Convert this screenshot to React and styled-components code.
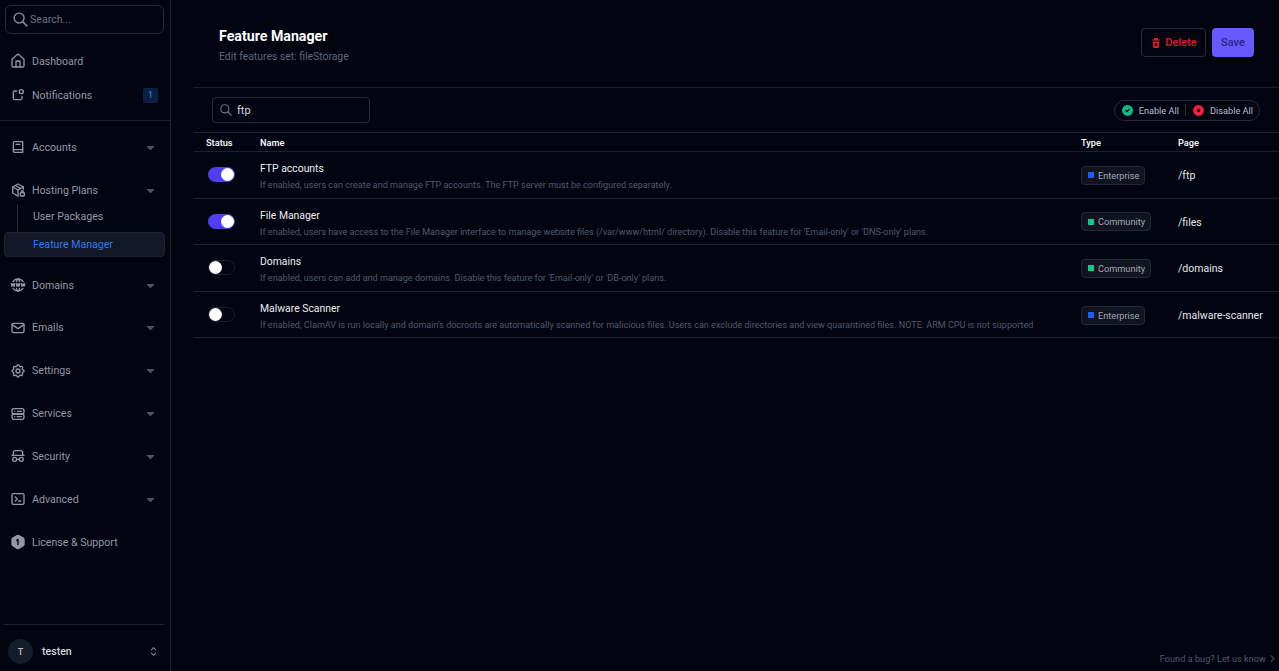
import React from 'react';
import styled, { createGlobalStyle } from 'styled-components';
import { LuHouse } from 'react-icons/lu';
import {
  TbSearch, TbNotification, TbBook2, TbWorldWww, TbMail,
  TbSettings, TbServer2, TbSpy, TbTerminal2, TbHexagonNumber1Filled, TbCaretDownFilled,
  TbSelector, TbCircleCheckFilled, TbCircleXFilled, TbChevronRight,
} from 'react-icons/tb';

const GlobalStyle = createGlobalStyle`
  html, body { margin: 0; padding: 0; height: 100%; background: #02040f; }
  body { font-family: Roboto, Inter, sans-serif; color: #fff; overflow: hidden; }
`;

const Page = styled.div`
  display: flex;
  width: 1279px;
  height: 671px;
  background: #02040f;
  overflow: hidden;
`;

const Sidebar = styled.aside`
  width: 170px;
  flex: none;
  border-right: 1px solid #1c2230;
  display: flex;
  flex-direction: column;
  padding-top: 5px;
`;

const SearchBox = styled.div`
  margin: 0 6px 0 5px;
  height: 29px;
  box-sizing: border-box;
  border: 1px solid #272c39;
  border-radius: 6px;
  display: flex;
  align-items: center;
  gap: 1px;
  padding-left: 6px;
  color: #6b7280;
  font-size: 10.6px;
  svg { color: #858b98; }
`;

const Nav = styled.nav`
  display: flex;
  flex-direction: column;
  flex: 1;
  padding-top: 10px;
`;

const NavRow = styled.div`
  height: ${(p) => p.$h || 42.85}px;
  flex: none;
  display: flex;
  align-items: center;
  padding: 0 12px 0 10px;
  color: #9298a4;
  font-size: 10.6px;
  gap: 6px;
  svg { flex: none; }
`;

const NavLabel = styled.span`
  flex: 1;
`;

const Caret = styled(TbCaretDownFilled)`
  color: #4c5361;
  margin-right: 1px;
`;

const Badge = styled.span`
  width: 15px;
  height: 15px;
  background: #0b2142;
  color: #3b82f6;
  font-size: 9px;
  border-radius: 2px;
  display: flex;
  align-items: center;
  justify-content: center;
`;

const NavDivider = styled.div`
  height: 1px;
  background: #1c2230;
  margin: 8px 0 5px;
`;

const SubList = styled.div`
  position: relative;
  display: flex;
  flex-direction: column;
  margin: -8px 0 4px;
`;

const SubLine = styled.div`
  position: absolute;
  left: 17px;
  top: 0;
  height: 27px;
  width: 1px;
  background: #252b38;
`;

const SubItem = styled.div`
  height: 25px;
  display: flex;
  align-items: center;
  margin: 0 5px 3px 4px;
  padding-left: 28px;
  font-size: 10.6px;
  border-radius: 4px;
  color: ${(p) => (p.$active ? '#2f7bf0' : '#9298a4')};
  background: ${(p) => (p.$active ? '#121827' : 'transparent')};
  border: 1px solid ${(p) => (p.$active ? '#1c2230' : 'transparent')};
  box-sizing: border-box;
`;

const UserBar = styled.div`
  margin: 0 6px 0 4px;
  height: 47px;
  box-sizing: border-box;
  border-top: 1px solid #1c2230;
  display: flex;
  align-items: center;
  padding: 7px 4px 0 4px;
  gap: 9px;
  color: #d4d7dd;
  font-size: 10.6px;
  font-weight: 500;
  svg { color: #7c828e; margin-left: auto; }
`;

const Avatar = styled.div`
  width: 25px;
  height: 25px;
  border-radius: 50%;
  background: #141b2b;
  color: #b7bcc6;
  font-size: 9px;
  display: flex;
  align-items: center;
  justify-content: center;
`;

const Main = styled.main`
  flex: 1;
  display: flex;
  flex-direction: column;
  min-width: 0;
`;

const Header = styled.header`
  height: 88px;
  flex: none;
  box-sizing: border-box;
  border-bottom: 1px solid #1c2230;
  margin-left: 23px;
  padding: 27px 25px 0 25px;
  display: flex;
  justify-content: space-between;
  align-items: flex-start;
`;

const Title = styled.h1`
  margin: 0;
  font-size: 14.2px;
  line-height: 18px;
  font-weight: 700;
  color: #fff;
`;

const Subtitle = styled.div`
  margin-top: 5px;
  font-size: 10.4px;
  color: #5d6778;
`;

const Actions = styled.div`
  display: flex;
  gap: 6px;
  margin-top: 1px;
`;

const DeleteButton = styled.button`
  width: 65px;
  height: 29px;
  background: transparent;
  border: 1px solid #272c39;
  border-radius: 4px;
  color: #e11d2e;
  font: 500 11px Roboto, sans-serif;
  display: flex;
  align-items: center;
  justify-content: center;
  gap: 3px;
  padding: 0;
`;

const SaveButton = styled.button`
  width: 42px;
  height: 29px;
  background: #6559ff;
  border: 0;
  border-radius: 4px;
  color: #2a2678;
  font: 500 11px Roboto, sans-serif;
  padding: 0;
`;

const Toolbar = styled.div`
  height: 44px;
  flex: none;
  box-sizing: border-box;
  margin-left: 23px;
  padding: 0 19px 0 18px;
  display: flex;
  align-items: center;
  justify-content: space-between;
`;

const FilterBox = styled.div`
  width: 158px;
  height: 26px;
  box-sizing: border-box;
  border: 1px solid #272c39;
  border-radius: 4px;
  display: flex;
  align-items: center;
  gap: 4px;
  padding-left: 6px;
  font-size: 11px;
  color: #d4d7dd;
  svg { color: #6b7280; }
`;

const BulkGroup = styled.div`
  height: 21px;
  box-sizing: border-box;
  border: 1px solid #272c39;
  border-radius: 11px;
  display: flex;
  align-items: center;
  padding: 0 6px;
  font-size: 9.2px;
  color: #b7bcc6;
`;

const BulkItem = styled.span`
  display: flex;
  align-items: center;
  gap: 5px;
  svg { color: ${(p) => p.$color}; }
`;

const BulkDivider = styled.span`
  width: 1px;
  height: 12px;
  background: #272c39;
  margin: 0 6px;
`;

const Table = styled.div`
  margin-left: 23px;
  border-top: 1px solid #1c2230;
`;

const Row = styled.div`
  display: grid;
  grid-template-columns: 54px 821px 97px 1fr;
  height: ${(p) => (p.$head ? 19 : 46.6)}px;
  box-sizing: border-box;
  padding: ${(p) => (p.$head ? 0 : 1)}px 0 0 12px;
  align-items: center;
  border-bottom: 1px solid #1c2230;
`;

const HeadCell = styled.div`
  font-size: 9.2px;
  font-weight: 600;
  color: #f1f2f4;
`;

const Toggle = styled.span`
  display: block;
  width: 27px;
  height: 15px;
  margin: -1px 0 0 2px;
  box-sizing: border-box;
  border-radius: 8px;
  position: relative;
  background: ${(p) => (p.$on ? '#4f3ff0' : '#02040f')};
  border: 1px solid ${(p) => (p.$on ? '#4f3ff0' : '#1c2230')};
  &::after {
    content: '';
    position: absolute;
    top: 0;
    left: ${(p) => (p.$on ? '12px' : '0')};
    width: 13px;
    height: 13px;
    border-radius: 50%;
    background: #fff;
  }
`;

const FeatureText = styled.div`
  padding-top: 3px;
`;

const FeatureName = styled.div`
  font-size: 10.4px;
  color: #eceef1;
  line-height: 14px;
`;

const FeatureDesc = styled.div`
  margin-top: 3px;
  font-size: 9.07px;
  line-height: 12px;
  color: #505a6b;
  white-space: nowrap;
`;

const TypeTag = styled.span`
  display: inline-flex;
  align-items: center;
  gap: 4px;
  height: 19px;
  box-sizing: border-box;
  padding: 0 5px 0 6px;
  background: #10141f;
  border: 1px solid #232836;
  border-radius: 4px;
  font-size: 9.2px;
  color: #a3a8b3;
  justify-self: start;
`;

const TypeDot = styled.i`
  width: 6px;
  height: 6px;
  background: ${(p) => p.$color};
  display: block;
`;

const PageCell = styled.div`
  margin-top: 1px;
  font-size: 10.5px;
  color: #e4e6ea;
  white-space: nowrap;
`;

const BugLink = styled.div`
  margin-top: auto;
  height: 18px;
  padding-right: 1px;
  display: flex;
  align-items: flex-start;
  justify-content: flex-end;
  gap: 1px;
  font-size: 9.2px;
  color: #4b5a74;
  svg { color: #7c828e; }
`;

const PackageIcon = ({ size }) => (
  <svg width={size} height={size} viewBox="0 0 24 24" fill="none" stroke="currentColor" strokeWidth="2" strokeLinecap="round" strokeLinejoin="round">
    <path d="M20 11V7.5L12 3 4 7.5v9l8 4.5" />
    <path d="M4 7.5l8 4.5 8-4.5M12 12v9M8 5.25l8 4.5" />
    <rect x="15.5" y="16" width="6" height="5" rx="1" />
    <path d="M17 16v-1.5a1.5 1.5 0 0 1 3 0V16" />
  </svg>
);

const TrashIcon = ({ size }) => (
  <svg width={size} height={size} viewBox="0 0 24 24" fill="currentColor">
    <path fillRule="evenodd" d="M9 2h6a1 1 0 0 1 1 1v2h4.5v2.2h-17V5H8V3a1 1 0 0 1 1-1zM5.5 9h13l-.9 11.5a1.6 1.6 0 0 1-1.6 1.5H8a1.6 1.6 0 0 1-1.6-1.5zM9.5 12v6h5v-6z" />
  </svg>
);

const topItems = [
  { icon: LuHouse, label: 'Dashboard', h: 34 },
  { icon: TbNotification, label: 'Notifications', h: 34, badge: 1 },
];

const menuItems = [
  { icon: TbWorldWww, label: 'Domains' },
  { icon: TbMail, label: 'Emails' },
  { icon: TbSettings, label: 'Settings' },
  { icon: TbServer2, label: 'Services' },
  { icon: TbSpy, label: 'Security' },
  { icon: TbTerminal2, label: 'Advanced' },
];

const features = [
  {
    name: 'FTP accounts',
    desc: 'If enabled, users can create and manage FTP accounts. The FTP server must be configured separately.',
    type: 'Enterprise',
    page: '/ftp',
    on: true,
  },
  {
    name: 'File Manager',
    desc: "If enabled, users have access to the File Manager interface to manage website files (/var/www/html/ directory). Disable this feature for 'Email-only' or 'DNS-only' plans.",
    type: 'Community',
    page: '/files',
    on: true,
  },
  {
    name: 'Domains',
    desc: "If enabled, users can add and manage domains. Disable this feature for 'Email-only' or 'DB-only' plans.",
    type: 'Community',
    page: '/domains',
    on: false,
  },
  {
    name: 'Malware Scanner',
    desc: "If enabled, ClamAV is run locally and domain's docroots are automatically scanned for malicious files. Users can exclude directories and view quarantined files. NOTE: ARM CPU is not supported",
    type: 'Enterprise',
    page: '/malware-scanner',
    on: false,
  },
];

const NavItem = ({ icon: Icon, label, h, badge, caret }) => (
  <NavRow $h={h}>
    <Icon size={16} />
    <NavLabel>{label}</NavLabel>
    {badge && <Badge>{badge}</Badge>}
    {caret && <Caret size={13} />}
  </NavRow>
);

export default function App() {
  return (
    <Page>
      <GlobalStyle />
      <Sidebar>
        <SearchBox>
          <TbSearch size={17} />
          Search...
        </SearchBox>
        <Nav>
          {topItems.map((item) => <NavItem key={item.label} {...item} />)}
          <NavDivider />
          <NavItem icon={TbBook2} label="Accounts" caret />
          <NavItem icon={PackageIcon} label="Hosting Plans" caret />
          <SubList>
            <SubLine />
            <SubItem>User Packages</SubItem>
            <SubItem $active>Feature Manager</SubItem>
          </SubList>
          {menuItems.map((item) => <NavItem key={item.label} {...item} caret />)}
          <NavItem icon={TbHexagonNumber1Filled} label="License & Support" />
        </Nav>
        <UserBar>
          <Avatar>T</Avatar>
          testen
          <TbSelector size={13} />
        </UserBar>
      </Sidebar>
      <Main>
        <Header>
          <div>
            <Title>Feature Manager</Title>
            <Subtitle>Edit features set: fileStorage</Subtitle>
          </div>
          <Actions>
            <DeleteButton><TrashIcon size={12} />Delete</DeleteButton>
            <SaveButton>Save</SaveButton>
          </Actions>
        </Header>
        <Toolbar>
          <FilterBox><TbSearch size={14} />ftp</FilterBox>
          <BulkGroup>
            <BulkItem $color="#10b981"><TbCircleCheckFilled size={13} />Enable All</BulkItem>
            <BulkDivider />
            <BulkItem $color="#f0213a"><TbCircleXFilled size={13} />Disable All</BulkItem>
          </BulkGroup>
        </Toolbar>
        <Table>
          <Row $head>
            <HeadCell>Status</HeadCell>
            <HeadCell>Name</HeadCell>
            <HeadCell>Type</HeadCell>
            <HeadCell>Page</HeadCell>
          </Row>
          {features.map((f) => (
            <Row key={f.name}>
              <Toggle $on={f.on} />
              <FeatureText>
                <FeatureName>{f.name}</FeatureName>
                <FeatureDesc>{f.desc}</FeatureDesc>
              </FeatureText>
              <TypeTag>
                <TypeDot $color={f.type === 'Enterprise' ? '#1d5cf5' : '#10c98f'} />
                {f.type}
              </TypeTag>
              <PageCell>{f.page}</PageCell>
            </Row>
          ))}
        </Table>
        <BugLink>Found a bug? Let us know <TbChevronRight size={11} /></BugLink>
      </Main>
    </Page>
  );
}
